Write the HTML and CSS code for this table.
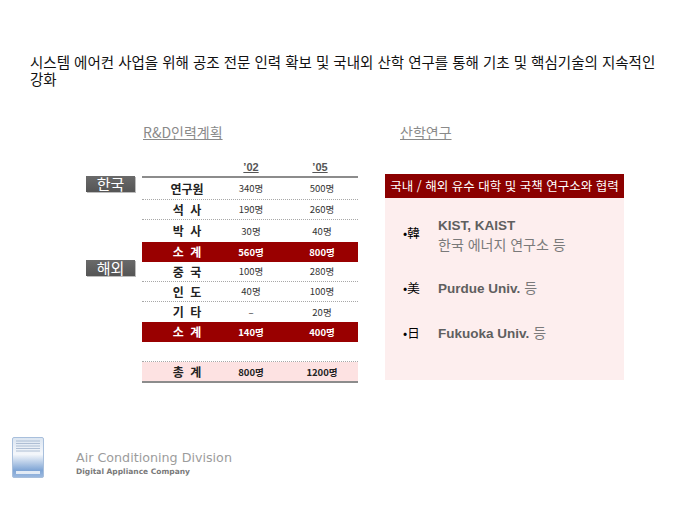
FILE: index.html
```html
<!DOCTYPE html>
<html lang="ko">
<head>
<meta charset="utf-8">
<title>R&amp;D 인력계획</title>
<link rel="stylesheet" href="styles.css">
</head>
<body>
<div class="page">
  <h1 class="title">시스템 에어컨 사업을 위해 공조 전문 인력 확보 및 국내외 산학 연구를 통해 기초 및 핵심기술의 지속적인 강화</h1>

  <div class="content">
    <section class="left">
      <h2 class="sec-title sec-left">R&amp;D인력계획</h2>
      <div class="tbl">
        <div class="trow">
          <div class="region"></div>
          <div class="row head"><span class="c1"></span><span class="c2"><u>’02</u></span><span class="c3"><u>’05</u></span></div>
        </div>
        <div class="trow">
          <div class="region"><span class="tag">한국</span></div>
          <div class="row r1 first"><span class="c1 lbl">연구원</span><span class="c2 num">340명</span><span class="c3 num">500명</span></div>
        </div>
        <div class="trow">
          <div class="region"></div>
          <div class="row r2"><span class="c1 lbl">석 사</span><span class="c2 num">190명</span><span class="c3 num">260명</span></div>
        </div>
        <div class="trow">
          <div class="region"></div>
          <div class="row r3"><span class="c1 lbl">박 사</span><span class="c2 num">30명</span><span class="c3 num">40명</span></div>
        </div>
        <div class="trow">
          <div class="region"></div>
          <div class="row red"><span class="c1 lbl">소 계</span><span class="c2 num">560명</span><span class="c3 num">800명</span></div>
        </div>
        <div class="trow">
          <div class="region"><span class="tag">해외</span></div>
          <div class="row"><span class="c1 lbl">중 국</span><span class="c2 num">100명</span><span class="c3 num">280명</span></div>
        </div>
        <div class="trow">
          <div class="region"></div>
          <div class="row"><span class="c1 lbl">인 도</span><span class="c2 num">40명</span><span class="c3 num">100명</span></div>
        </div>
        <div class="trow">
          <div class="region"></div>
          <div class="row nob"><span class="c1 lbl">기 타</span><span class="c2 num">–</span><span class="c3 num">20명</span></div>
        </div>
        <div class="trow">
          <div class="region"></div>
          <div class="row red red2"><span class="c1 lbl">소 계</span><span class="c2 num">140명</span><span class="c3 num">400명</span></div>
        </div>
        <div class="trow">
          <div class="region"></div>
          <div class="row blank"></div>
        </div>
        <div class="trow">
          <div class="region"></div>
          <div class="row total"><span class="c1 lbl">총 계</span><span class="c2 num">800명</span><span class="c3 num">1200명</span></div>
        </div>
      </div>
    </section>

    <section class="right">
      <h2 class="sec-title sec-right">산학연구</h2>
      <div class="panel">
        <div class="panel-head">국내 / 해외 유수 대학 및 국책 연구소와 협력</div>
        <div class="panel-body">
          <div class="item">
            <span class="marker">•韓</span>
            <div class="itext">
              <div class="strong">KIST, KAIST</div>
              <div class="light">한국 에너지 연구소 등</div>
            </div>
          </div>
          <div class="item">
            <span class="marker">•美</span>
            <div class="itext"><span class="strong">Purdue Univ.</span> <span class="light">등</span></div>
          </div>
          <div class="item">
            <span class="marker">•日</span>
            <div class="itext"><span class="strong">Fukuoka Univ.</span> <span class="light">등</span></div>
          </div>
        </div>
      </div>
    </section>
  </div>

  <footer class="footer">
    <svg class="logo" width="32" height="41" viewBox="0 0 32 41" aria-hidden="true">
      <defs>
        <linearGradient id="lg" x1="0" y1="0" x2="0" y2="1">
          <stop offset="0" stop-color="#dbe5f1"/>
          <stop offset="0.42" stop-color="#f4f7fb"/>
          <stop offset="0.82" stop-color="#7fa5d5"/>
          <stop offset="1" stop-color="#9dbae0"/>
        </linearGradient>
      </defs>
      <rect x="0.5" y="0.5" width="31" height="40" rx="1.5" fill="url(#lg)" stroke="#a8bfdc"/>
      <g stroke="#9fb3cc" stroke-width="0.8">
        <line x1="4" y1="4" x2="28" y2="4"/>
        <line x1="4" y1="6.5" x2="28" y2="6.5"/>
        <line x1="4" y1="9" x2="28" y2="9"/>
        <line x1="4" y1="11.5" x2="28" y2="11.5"/>
        <line x1="4" y1="14" x2="28" y2="14"/>
      </g>
      <rect x="4" y="34" width="24" height="3" fill="#e3ebf5"/>
    </svg>
    <div class="brand">
      <div class="brand-main">Air Conditioning Division</div>
      <div class="brand-sub">Digital Appliance Company</div>
    </div>
  </footer>
</div>
</body>
</html>
```

FILE: styles.css
```css
html, body {
  margin: 0;
  padding: 0;
  background: #ffffff;
}
body {
  width: 680px;
  height: 510px;
  overflow: hidden;
  font-family: "Noto Sans CJK KR", "Liberation Sans", sans-serif;
}
.page {
  width: 680px;
}
.title {
  margin: 0;
  padding: 53px 0 0 30px;
  width: 640px;
  font-size: 14.5px;
  line-height: 17px;
  font-weight: normal;
  color: #111111;
}
.content {
  display: flex;
  margin-top: 37px;
  margin-left: 86px;
}
.left {
  width: 272px;
}
.right {
  width: 239px;
  margin-left: 27px;
}
.sec-title {
  margin: 0;
  font-size: 14px;
  line-height: 16px;
  font-weight: normal;
  color: #8a8a8a;
  text-decoration: underline;
}
.sec-left {
  margin-left: 57px;
}
.sec-right {
  margin-left: 15px;
}

/* table */
.tbl {
  margin-top: 19px;
}
.trow {
  display: flex;
}
.region {
  width: 49px;
  margin-right: 7px;
  flex: none;
}
.tag {
  display: block;
  height: 16px;
  margin-top: -2px;
  background: linear-gradient(#6a6a6a, #555555);
  color: #ffffff;
  font-size: 15px;
  line-height: 16px;
  text-align: center;
  box-shadow: 1px 1px 0 #bdbdbd;
}
.row {
  width: 216px;
  height: 20px;
  box-sizing: border-box;
  display: flex;
  align-items: center;
  border-bottom: 1px dotted #a8a8a8;
}
.c1, .c2, .c3 {
  box-sizing: border-box;
  text-align: center;
  flex: none;
}
.c1 { width: 90px; }
.c2 { width: 58px; padding-right: 20px; }
.c3 { width: 68px; padding-right: 4px; }

.head {
  height: 19px;
  border-bottom: 2px solid #8c8c8c;
  align-items: flex-end;
  padding-bottom: 2px;
  font-family: "Liberation Sans", sans-serif;
  font-size: 11px;
  font-weight: bold;
  line-height: 14px;
  color: #555555;
}
.head .c3 { padding-right: 8px; }
.r1 { height: 21.5px; }
.r3 { height: 22px; border-bottom: none; }
.nob { border-bottom: none; }
.lbl {
  font-size: 12px;
  font-weight: bold;
  color: #222222;
  word-spacing: 3px;
}
.num {
  font-size: 9.5px;
  color: #333333;
}
.red {
  background: #990000;
  border-bottom: none;
}
.red2 { height: 20.5px; }
.red .lbl, .red .num {
  color: #ffffff;
  font-weight: bold;
}
.blank {
  height: 20px;
}
.total {
  height: 21px;
  background: #fde2e2;
  border-bottom: 2px solid #8c8c8c;
}
.total .num {
  font-weight: bold;
  color: #222222;
}

/* right panel */
.panel {
  margin-top: 34px;
}
.panel-head {
  height: 24px;
  background: #8b0000;
  color: #ffffff;
  font-size: 12.5px;
  line-height: 24px;
  text-align: center;
}
.panel-body {
  height: 182px;
  background: #fdeeee;
  padding: 19px 0 0 18px;
  box-sizing: border-box;
  display: flex;
  flex-direction: column;
  gap: 25px;
}
.item {
  display: flex;
  align-items: center;
}
.marker {
  width: 35px;
  flex: none;
  font-size: 12.5px;
  color: #000000;
  line-height: 18px;
}
.item:first-child .marker {
  margin-top: -4px;
}
.itext {
  font-size: 14px;
  line-height: 18px;
  color: #666666;
}
.strong {
  font-family: "Liberation Sans", "Noto Sans CJK KR", sans-serif;
  font-size: 13.5px;
  font-weight: bold;
  color: #5f5f5f;
}
.light {
  color: #7a7a7a;
}

/* footer */
.footer {
  display: flex;
  align-items: flex-start;
  margin-top: 54px;
  padding-left: 12px;
}
.logo {
  display: block;
  flex: none;
}
.brand {
  margin-left: 32px;
  padding-top: 13px;
  font-family: "DejaVu Sans", sans-serif;
}
.brand-main {
  font-size: 12.7px;
  line-height: 15px;
  color: #9c9c9c;
}
.brand-sub {
  margin-top: 2px;
  font-size: 7.5px;
  line-height: 10px;
  font-weight: bold;
  color: #7a7a7a;
}
```
